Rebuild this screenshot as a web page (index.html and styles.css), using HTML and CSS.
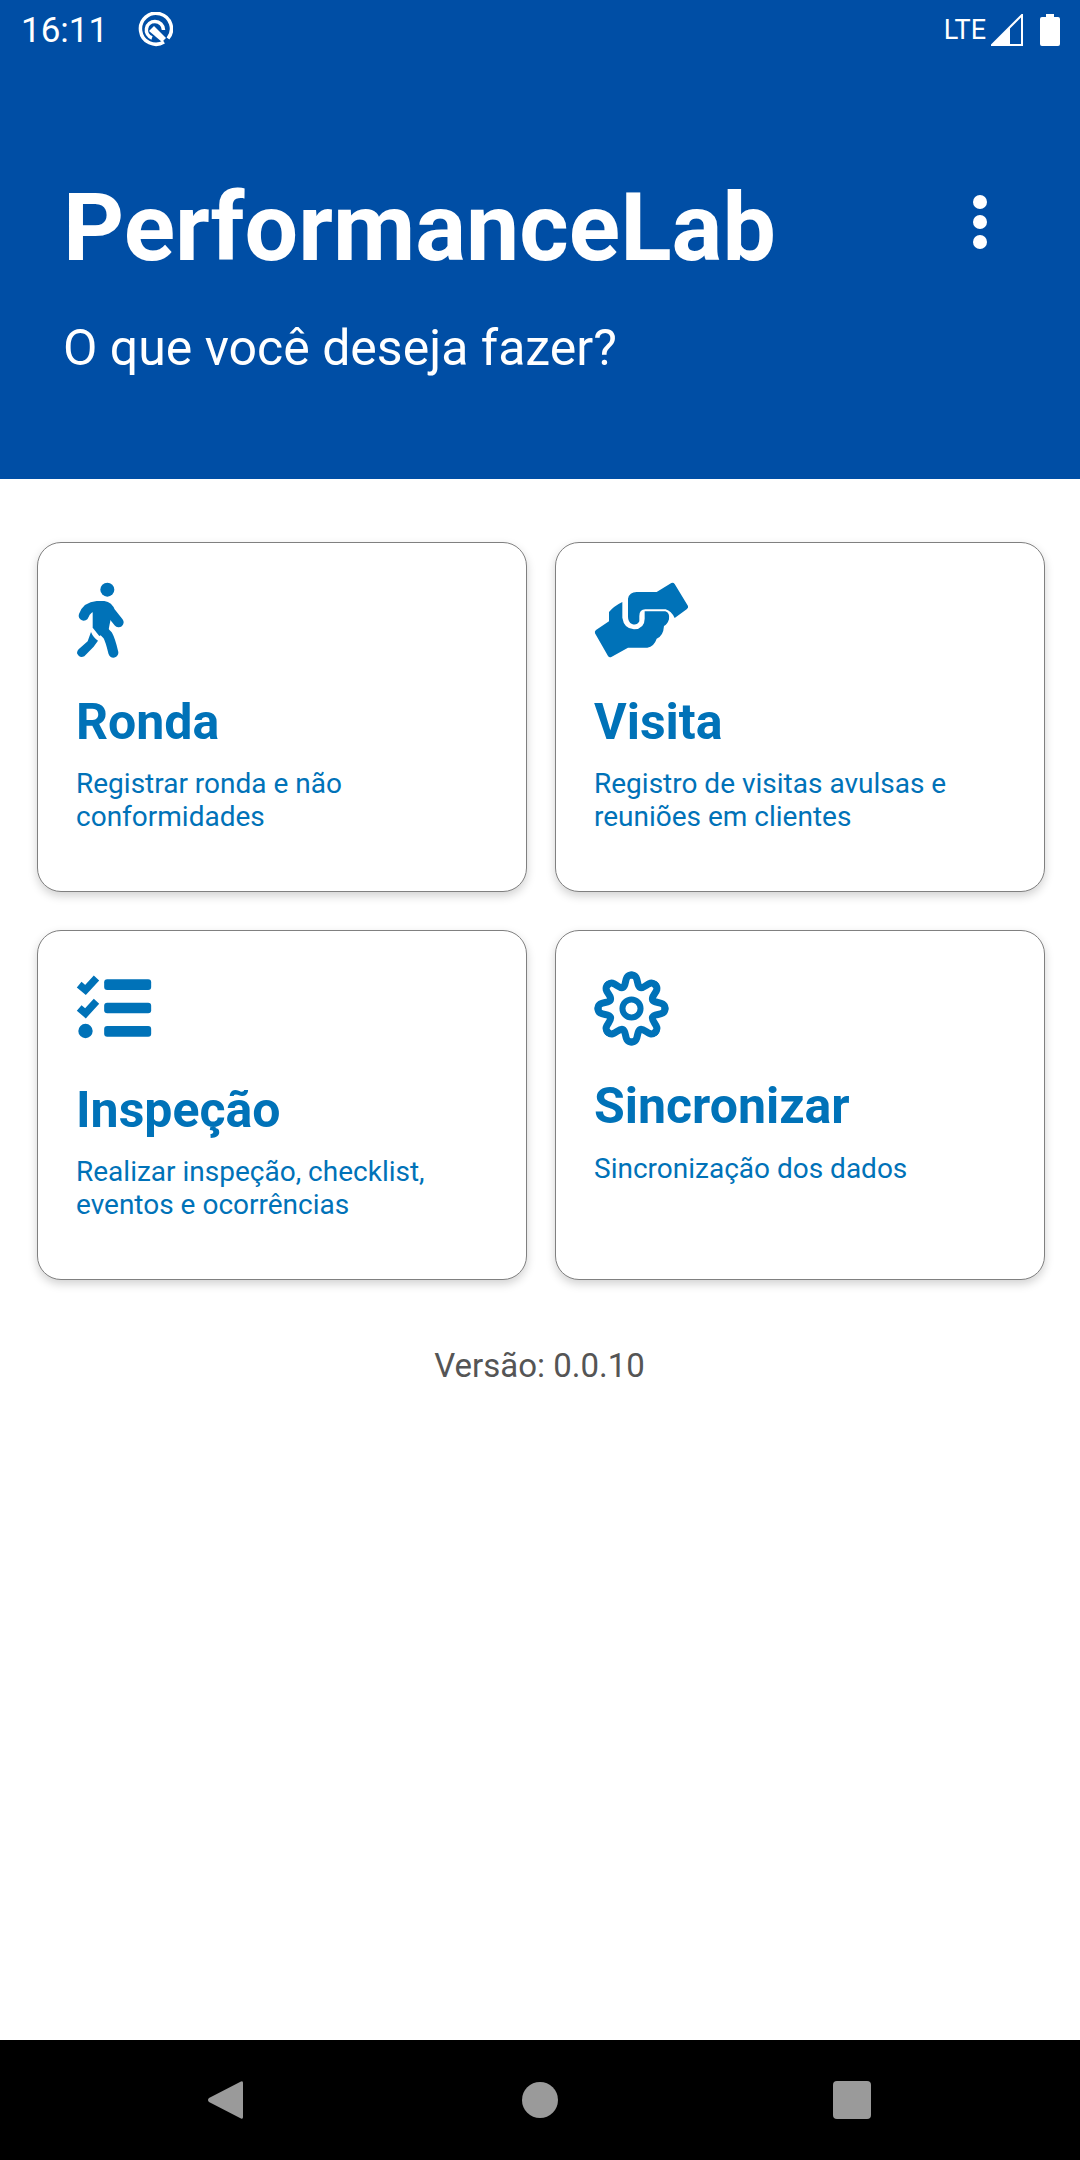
FILE: index.html
```html
<!DOCTYPE html>
<html lang="pt-BR">
<head>
  <meta charset="UTF-8">
  <meta name="viewport" content="width=device-width, initial-scale=1.0">
  <title>PerformanceLab</title>
  <link rel="stylesheet" href="styles.css">
</head>
<body>
  <header class="topo">
    <div class="status-bar">
      <div class="status-esq">
        <span class="hora">16:11</span>
        <svg class="icone-q" viewBox="0 0 36 36">
          <path d="M27 30A15.500 15.500 0 1 1 31 26.500" fill="none" stroke="#fff" stroke-width="3.500"/>
          <path d="M15 26A8.500 8.500 0 0 1 18 9.500A8.500 8.500 0 0 1 26.500 18" fill="none" stroke="#fff" stroke-width="3.500"/>
          <path d="M12 19L17 14L29 26L25 30Z" fill="#fff"/>
        </svg>
      </div>
      <div class="status-dir">
        <span class="lte">LTE</span>
        <svg class="icone-sinal" viewBox="0 0 32 32">
          <path d="M31 1V31H1Z" fill="none" stroke="#fff" stroke-width="2"/>
          <path d="M19 13V31H1Z" fill="#fff"/>
        </svg>
        <svg class="icone-bateria" viewBox="0 0 20 32">
          <path d="M6 0H14V3H18Q20 3 20 5V30Q20 32 18 32H2Q0 32 0 30V5Q0 3 2 3H6Z" fill="#fff"/>
        </svg>
      </div>
    </div>
    <div class="topo-linha">
      <div>
        <h1>PerformanceLab</h1>
        <p class="pergunta">O que você deseja fazer?</p>
      </div>
      <div class="menu-pontos"><span></span><span></span><span></span></div>
    </div>
  </header>

  <main class="conteudo">
    <div class="grade">
      <div class="cartao">
        <div class="cartao-icone">
          <svg class="ic-ronda" viewBox="135 158 150 228">
            <circle cx="229" cy="181" r="21" fill="#0072b8"/>
            <path d="M158 259Q168 232 198 230L218 230Q232 232 238 248L263 279" fill="none" stroke="#0072b8" stroke-width="30" stroke-linecap="round" stroke-linejoin="round"/>
            <path d="M185 235L245 240L232 305L205 320L185 295Z" fill="#0072b8"/>
            <path d="M205 292L230 318Q238 332 247 370" fill="none" stroke="#0072b8" stroke-width="30" stroke-linecap="round"/>
            <path d="M180 308Q187 325 201 334L188 352L160 381Q145 388 138 372Q138 362 148 355L170 336Z" fill="#0072b8"/>
          </svg>
        </div>
        <h2>Ronda</h2>
        <p>Registrar ronda e não conformidades</p>
      </div>

      <div class="cartao">
        <div class="cartao-icone">
          <svg class="ic-visita" viewBox="130 68 285 228">
            <path d="M232 118Q236 98 258 98L318 98L362 71Q368 68 372 74L412 140Q414 146 408 150L372 176Q362 155 345 150L284 150Q266 150 266 170L266 186Q258 200 244 194Q232 188 232 172Z" fill="#0072b8"/>
            <path d="M136 212L175 186L175 158Q190 140 215 128L215 175Q220 208 250 210Q282 208 282 178L282 156L344 156Q358 160 355 180Q350 196 340 200Q338 230 318 238Q310 262 290 265L232 265L182 293Q176 296 172 290L133 222Q131 216 136 212Z" fill="#0072b8"/>
          </svg>
        </div>
        <h2>Visita</h2>
        <p>Registro de visitas avulsas e reuniões em clientes</p>
      </div>

      <div class="cartao">
        <div class="cartao-icone">
          <svg class="ic-inspecao" viewBox="135 165 230 195">
            <path d="M147 197L166 213L199 177" fill="none" stroke="#0072b8" stroke-width="22" stroke-linejoin="miter"/>
            <path d="M147 267L166 283L199 247" fill="none" stroke="#0072b8" stroke-width="22" stroke-linejoin="miter"/>
            <circle cx="166" cy="336" r="21.500" fill="#0072b8"/>
            <rect x="222" y="181" width="141" height="32" rx="9" fill="#0072b8"/>
            <rect x="222" y="251" width="141" height="32" rx="9" fill="#0072b8"/>
            <rect x="222" y="321" width="141" height="32" rx="9" fill="#0072b8"/>
          </svg>
        </div>
        <h2>Inspeção</h2>
        <p>Realizar inspeção, checklist, eventos e ocorrências</p>
      </div>

      <div class="cartao cartao-sinc">
        <div class="cartao-icone">
          <svg class="ic-sinc" viewBox="-112 -112 224 224">
            <defs>
              <!-- um dente da engrenagem, repetido 8 vezes -->
              <path id="dente" d="M0 -100C24 -100 13 -68.200 26 -62.800C39 -57.400 53.700 -87.700 70.700 -70.700" fill="none" stroke="#0072b8" stroke-width="21" stroke-linecap="round"/>
            </defs>
            <use href="#dente"/>
            <use href="#dente" transform="rotate(45)"/>
            <use href="#dente" transform="rotate(90)"/>
            <use href="#dente" transform="rotate(135)"/>
            <use href="#dente" transform="rotate(180)"/>
            <use href="#dente" transform="rotate(225)"/>
            <use href="#dente" transform="rotate(270)"/>
            <use href="#dente" transform="rotate(315)"/>
            <circle cx="0" cy="0" r="27" fill="none" stroke="#0072b8" stroke-width="18"/>
          </svg>
        </div>
        <h2>Sincronizar</h2>
        <p>Sincronização dos dados</p>
      </div>
    </div>

    <p class="versao">Versão: 0.0.10</p>
  </main>

  <nav class="barra-nav">
    <svg class="nav-voltar" viewBox="0 0 35 40">
      <path d="M33 1.500Q35 0.500 35 3V37Q35 39.500 33 38.500L1 22Q-1 20 1 18Z" fill="#9a9a9a"/>
    </svg>
    <div class="nav-home"></div>
    <div class="nav-recentes"></div>
  </nav>
</body>
</html>
```

FILE: styles.css
```css
* {
  box-sizing: border-box;
}
body {
  margin: 0;
  height: 2160px;
  display: flex;
  flex-direction: column;
  background-color: #fff;
  font-family: Roboto, sans-serif;
}
.topo {
  height: 479px;
  background-color: #004ea5;
  color: #fff;
}
.status-bar {
  height: 60px;
  padding: 0 20px 0 21px;
  display: flex;
  justify-content: space-between;
  align-items: center;
}
.status-esq, .status-dir {
  display: flex;
  align-items: center;
}
.hora {
  font-size: 35px;
  margin-right: 29px;
}
.icone-q {
  width: 36px;
  height: 36px;
}
.lte {
  font-size: 27px;
  margin-right: 5px;
}
.icone-sinal {
  width: 32px;
  height: 32px;
  margin-right: 17px;
}
.icone-bateria {
  width: 20px;
  height: 32px;
}
.topo-linha {
  padding: 112px 0 0 63px;
  display: flex;
}
h1 {
  margin: 0;
  font-size: 95px;
  font-weight: 700;
  line-height: 112px;
}
.pergunta {
  margin: 36px 0 0;
  font-size: 50px;
  line-height: 56px;
}
.menu-pontos {
  margin: 23px 0 0 197px;
  display: flex;
  flex-direction: column;
  gap: 6px;
}
.menu-pontos span {
  width: 14px;
  height: 14px;
  border-radius: 50%;
  background-color: #fff;
}
.conteudo {
  flex: 1;
  padding: 63px 35px 0 37px;
}
.grade {
  display: grid;
  grid-template-columns: 490px 490px;
  grid-template-rows: 350px 350px;
  column-gap: 28px;
  row-gap: 38px;
}
.cartao {
  border: 1.500px solid #808080;
  border-radius: 24px;
  padding: 39px 30px 0 38px;
  background-color: #fff;
  box-shadow: 0 4px 10px rgba(0, 0, 0, 0.18);
  color: #0072b8;
}
.cartao-icone {
  height: 76px;
  display: flex;
  align-items: center;
}
.ic-ronda {
  width: 50px;
  height: 76px;
}
.ic-visita {
  width: 95px;
  height: 76px;
}
.ic-inspecao {
  width: 77px;
  height: 65px;
  margin: 0 0 3px -1px;
}
.ic-sinc {
  width: 75px;
  height: 75px;
}
.cartao h2 {
  margin: 37px 0 0;
  font-size: 50px;
  font-weight: 700;
  line-height: 54px;
}
.cartao p {
  margin: 18px 0 0;
  font-size: 28px;
  line-height: 33px;
}
.cartao-sinc h2 {
  margin-top: 33px;
}
.cartao-sinc p {
  margin-top: 19px;
}
.versao {
  margin: 67px 0 0;
  padding-right: 3px;
  text-align: center;
  font-size: 33px;
  line-height: 38px;
  color: #555;
}
.barra-nav {
  height: 120px;
  background-color: #000;
  display: flex;
  align-items: center;
  padding-left: 208px;
}
.nav-voltar {
  width: 35px;
  height: 40px;
}
.nav-home {
  width: 36px;
  height: 36px;
  margin-left: 279px;
  border-radius: 50%;
  background-color: #9a9a9a;
}
.nav-recentes {
  width: 38px;
  height: 38px;
  margin-left: 275px;
  border-radius: 4px;
  background-color: #9a9a9a;
}
```
